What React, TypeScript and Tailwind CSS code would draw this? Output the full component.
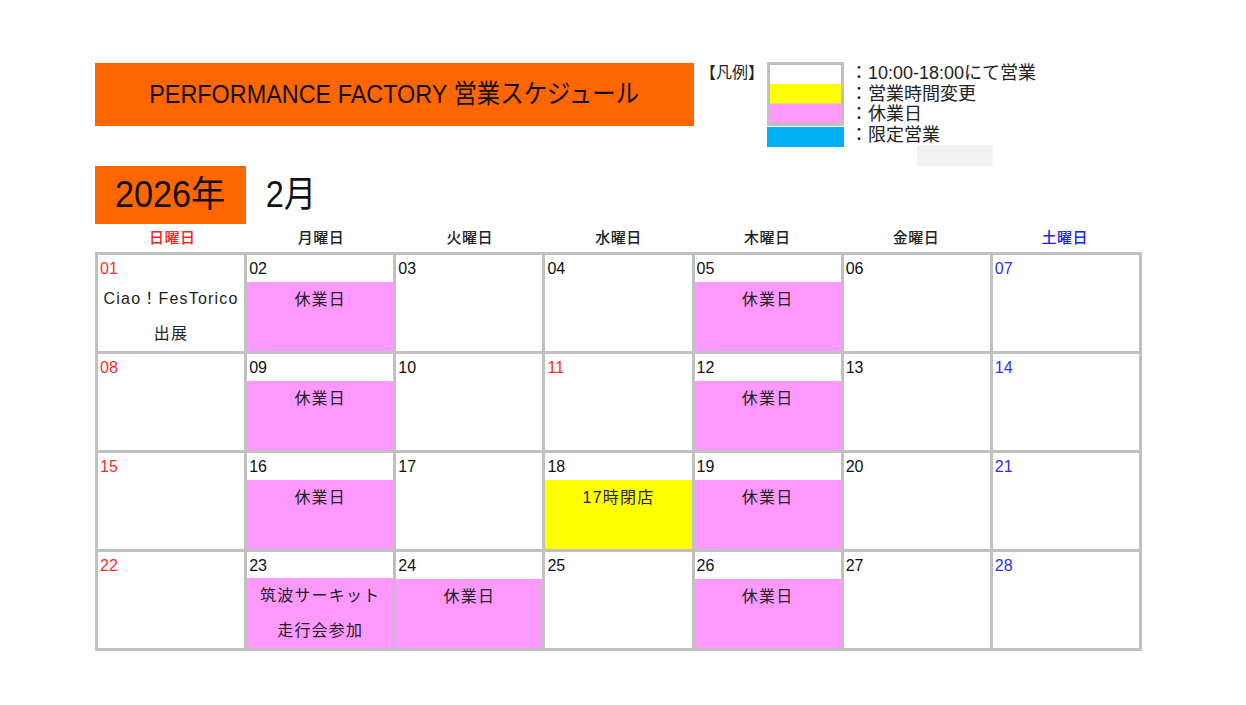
const FONT = "font-['Liberation_Sans','Noto_Sans_CJK_JP',sans-serif]";

type Day = {
  d: string;
  color?: 'red' | 'blue';
  fill?: 'pink' | 'yellow';
  lines?: string[];
};

const weeks: Day[][] = [
  [
    { d: '01', color: 'red', lines: ['Ciao！FesTorico', '出展'] },
    { d: '02', fill: 'pink', lines: ['休業日'] },
    { d: '03' },
    { d: '04' },
    { d: '05', fill: 'pink', lines: ['休業日'] },
    { d: '06' },
    { d: '07', color: 'blue' },
  ],
  [
    { d: '08', color: 'red' },
    { d: '09', fill: 'pink', lines: ['休業日'] },
    { d: '10' },
    { d: '11', color: 'red' },
    { d: '12', fill: 'pink', lines: ['休業日'] },
    { d: '13' },
    { d: '14', color: 'blue' },
  ],
  [
    { d: '15', color: 'red' },
    { d: '16', fill: 'pink', lines: ['休業日'] },
    { d: '17' },
    { d: '18', fill: 'yellow', lines: ['17時閉店'] },
    { d: '19', fill: 'pink', lines: ['休業日'] },
    { d: '20' },
    { d: '21', color: 'blue' },
  ],
  [
    { d: '22', color: 'red' },
    { d: '23', fill: 'pink', lines: ['筑波サーキット', '走行会参加'] },
    { d: '24', fill: 'pink', lines: ['休業日'] },
    { d: '25' },
    { d: '26', fill: 'pink', lines: ['休業日'] },
    { d: '27' },
    { d: '28', color: 'blue' },
  ],
];

const headers = ['日曜日', '月曜日', '火曜日', '水曜日', '木曜日', '金曜日', '土曜日'];

const Cell = ({ day }: { day: Day }) => {
  const numColor =
    day.color === 'red' ? 'text-[#ff2b2b]' : day.color === 'blue' ? 'text-[#2d2dff]' : 'text-[#111]';
  const fill =
    day.fill === 'pink' ? 'bg-[#ff99ff]' : day.fill === 'yellow' ? 'bg-[#ffff00]' : 'bg-white';
  return (
    <div className="flex h-[96px] flex-col bg-white">
      <div className={`h-[27px] pl-[2px] pt-[3px] text-[16px] leading-[22px] ${numColor}`}>{day.d}</div>
      <div className={`flex-1 text-center text-[16px] leading-[35px] tracking-[1.2px] text-[#222] ${fill}`}>
        {day.lines?.map((l) => (
          <div key={l}>{l}</div>
        ))}
      </div>
    </div>
  );
};

export default function App() {
  return (
    <div className={`min-h-[705px] bg-white pl-[95px] pt-[62px] ${FONT}`}>
      <div className="flex items-start">
        <div className="mt-[1px] flex h-[63px] w-[599px] items-center justify-center bg-[#ff6600]">
          <span className="inline-block scale-x-[0.9] text-[26px] text-[#111]">PERFORMANCE FACTORY 営業スケジュール</span>
        </div>
        <div className="ml-[6px] flex">
          <div className="w-[67px] pt-[1px] text-[16px] leading-[20px] text-[#222]">【凡例】</div>
          <div className="flex w-[77px] flex-col">
            <div className="border-[3px] border-[#bfbfbf]">
              <div className="h-[19px] bg-white" />
              <div className="h-[20px] border-b border-[#d8d8a0] bg-[#ffff00]" />
              <div className="h-[19px] bg-[#ff99ff]" />
            </div>
            <div className="mt-[1px] h-[20px] bg-[#00b0f0]" />
          </div>
          <div className="ml-[6px] pt-[1px] text-[18px] leading-[20.5px] text-[#222]">
            <div>：10:00-18:00にて営業</div>
            <div>：営業時間変更</div>
            <div>：休業日</div>
            <div>：限定営業</div>
            <div className="ml-[67px] h-[21px] w-[76px] bg-[#f2f2f2]" />
          </div>
        </div>
      </div>

      <div className="flex items-center">
        <div className="flex h-[58px] w-[151px] items-center justify-center bg-[#ff6600]">
          <span className="inline-block scale-x-[0.95] text-[36px] text-[#111]">2026年</span>
        </div>
        <span className="ml-[17px] inline-block scale-x-[0.9] text-[36px] text-[#111]">2月</span>
      </div>

      <div className="w-[1047px]">
        <div className="grid h-[28px] grid-cols-7 items-center px-[3px]">
          {headers.map((h, i) => (
            <div
              key={h}
              className={`text-center text-[15px] font-medium tracking-[0.5px] ${
                i === 0 ? 'text-[#ff2020]' : i === 6 ? 'text-[#2020ff]' : 'text-[#222]'
              }`}
            >
              {h}
            </div>
          ))}
        </div>
        <div className="grid grid-cols-7 gap-[3px] bg-[#c0c0c0] p-[3px]">
          {weeks.flat().map((day) => (
            <Cell key={day.d} day={day} />
          ))}
        </div>
      </div>
    </div>
  );
}
